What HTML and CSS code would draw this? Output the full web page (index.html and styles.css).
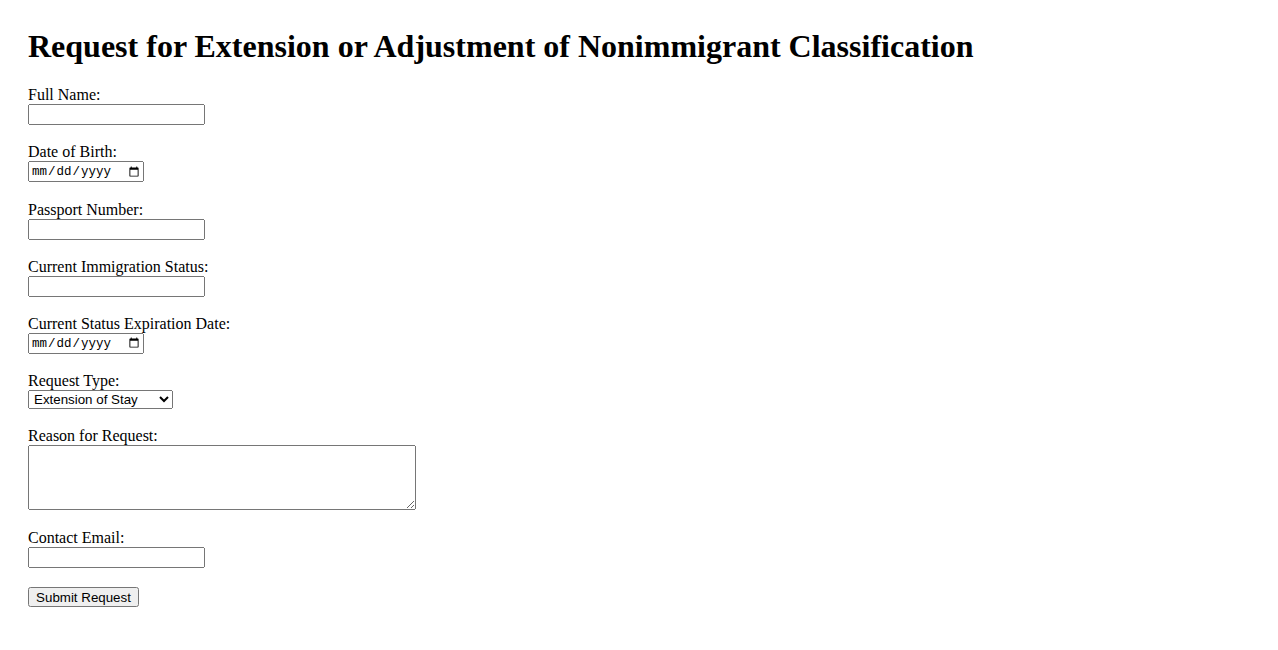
FILE: index.html
```html
<!DOCTYPE html>
<html lang="en">
<head>
<meta charset="utf-8">
<title>Request for Extension or Adjustment of Nonimmigrant Classification</title>
<link rel="stylesheet" href="styles.css">
</head>
<body>
<div class="page">
  <h1 class="title">Request for Extension or Adjustment of Nonimmigrant Classification</h1>
  <form class="form">
    <div class="field">
      <label class="label" for="fullName">Full Name:</label>
      <input class="control text-input" type="text" id="fullName" name="fullName">
    </div>
    <div class="field">
      <label class="label" for="dob">Date of Birth:</label>
      <input class="control date-input" type="date" id="dob" name="dob">
    </div>
    <div class="field">
      <label class="label" for="passport">Passport Number:</label>
      <input class="control text-input" type="text" id="passport" name="passport">
    </div>
    <div class="field">
      <label class="label" for="status">Current Immigration Status:</label>
      <input class="control text-input" type="text" id="status" name="status">
    </div>
    <div class="field">
      <label class="label" for="expiry">Current Status Expiration Date:</label>
      <input class="control date-input" type="date" id="expiry" name="expiry">
    </div>
    <div class="field field-select">
      <label class="label" for="requestType">Request Type:</label>
      <select class="control select" id="requestType" name="requestType">
        <option>Extension of Stay</option>
        <option>Change of Status</option>
      </select>
    </div>
    <div class="field field-area">
      <label class="label" for="reason">Reason for Request:</label>
      <textarea class="control textarea" id="reason" name="reason"></textarea>
    </div>
    <div class="field">
      <label class="label" for="email">Contact Email:</label>
      <input class="control text-input" type="email" id="email" name="email">
    </div>
    <button class="submit" type="submit">Submit Request</button>
  </form>
</div>
</body>
</html>
```
FILE: styles.css
```css
body {
  margin: 0;
  background: #ffffff;
  color: #000000;
  font-family: "Liberation Serif", "Times New Roman", serif;
  font-size: 16px;
}

.page {
  padding: 28px 28px;
}

.title {
  margin: 0 0 20px;
  font-size: 32px;
  font-weight: bold;
  line-height: 37px;
}

.form {
  display: flex;
  flex-direction: column;
  align-items: flex-start;
}

.field {
  display: flex;
  flex-direction: column;
  align-items: flex-start;
  margin-bottom: 17.3px;
}

.field-select {
  margin-bottom: 16.8px;
}

.field-area {
  margin-bottom: 18px;
}

.label {
  box-sizing: border-box;
  height: 19px;
  padding-top: 1px;
  line-height: 18px;
}

.control {
  margin: 0;
  box-sizing: border-box;
  font-family: "Liberation Sans", Arial, sans-serif;
  font-size: 13.333px;
}

.text-input {
  width: 177px;
  height: 21px;
}

.date-input {
  width: 116px;
  height: 21px;
  font-family: "Liberation Mono", "Courier New", monospace;
  font-size: 12.5px;
}

.select {
  width: 145px;
  height: 19px;
  padding: 0 0 0 1px;
}

.textarea {
  width: 388px;
  height: 65px;
}

.submit {
  margin: 1.4px 0 0;
  width: 111px;
  height: 20px;
  box-sizing: border-box;
  font-family: "Liberation Sans", Arial, sans-serif;
  font-size: 13.333px;
}
```
